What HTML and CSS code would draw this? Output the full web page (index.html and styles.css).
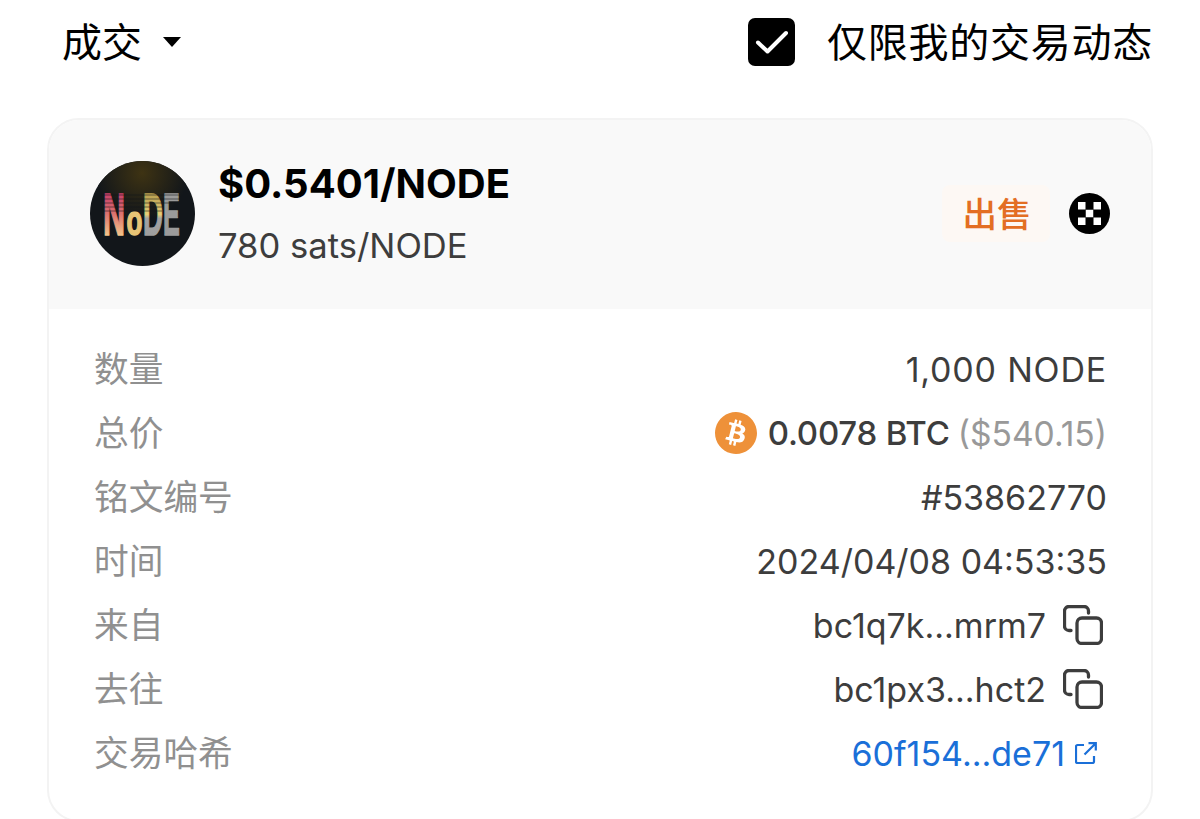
FILE: index.html
```html
<!DOCTYPE html>
<html lang="zh-CN">

<head>
  <meta charset="UTF-8">
  <meta name="viewport" content="width=device-width, initial-scale=1">
  <title>成交</title>
  <link rel="stylesheet" href="styles.css">
</head>

<body>
  <div class="topo">
    <div class="filtro">成交 <span class="seta"></span></div>
    <label class="so-meu">
      <span class="caixa">
        <svg width="47" height="48" viewBox="0 0 47 48"><path d="M10 24.500 L19.500 33.500 L38 15" fill="none" stroke="#fff" stroke-width="4" stroke-linecap="round" stroke-linejoin="round"/></svg>
      </span>
      <span class="so-meu-txt">仅限我的交易动态</span>
    </label>
  </div>

  <div class="card">
    <div class="card-topo">
      <svg class="avatar" width="105" height="105" viewBox="0 0 105 105">
        <defs>
          <clipPath id="redondo"><circle cx="52.500" cy="52.500" r="52.500"/></clipPath>
          <radialGradient id="brilho" cx="0.5" cy="0.5" r="0.5">
            <stop offset="0" stop-color="#3e3313"/>
            <stop offset="1" stop-color="#12161a"/>
          </radialGradient>
          <linearGradient id="cor-n" x1="0" y1="0" x2="0" y2="1">
            <stop offset="0.2" stop-color="#c9406a"/>
            <stop offset="0.5" stop-color="#dc7470"/>
            <stop offset="0.85" stop-color="#f5cd8c"/>
          </linearGradient>
          <linearGradient id="cor-d" x1="0" y1="0" x2="0" y2="1">
            <stop offset="0.2" stop-color="#b9a050"/>
            <stop offset="0.5" stop-color="#e8cf78"/>
            <stop offset="0.56" stop-color="#a3a3a3"/>
            <stop offset="1" stop-color="#9a9a9a"/>
          </linearGradient>
        </defs>
        <g clip-path="url(#redondo)">
          <rect width="105" height="105" fill="#12161a"/>
          <circle cx="52" cy="12" r="46" fill="url(#brilho)"/>
        </g>
        <g class="avatar-letras">
          <text transform="translate(13 74) scale(0.51 1)" fill="url(#cor-n)" stroke="url(#cor-n)">N</text>
          <text transform="translate(36.500 74) scale(0.62 1)" class="avatar-o" fill="#e7c476" stroke="#e7c476">o</text>
          <text transform="translate(53 74) scale(0.46 1)" fill="url(#cor-d)" stroke="url(#cor-d)">D</text>
          <text transform="translate(73 74) scale(0.42 1)" fill="#9b9b9b" stroke="#9b9b9b">E</text>
        </g>
        <path d="M13 34H90M13 38H90M13 42H90M13 46H72M13 50H72" stroke="#12161a" stroke-width="1" opacity="0.55"/>
      </svg>
      <div class="preco">
        <div class="preco-usd">$0.5401/NODE</div>
        <div class="preco-sats">780 sats/NODE</div>
      </div>
      <div class="venda">出售</div>
      <svg class="okx" width="41" height="41" viewBox="0 0 41 41">
        <circle cx="20.500" cy="20.500" r="20.500" fill="#000"/>
        <path d="M9 9h7.500v7.500H9zM24.500 9h7.500v7.500h-7.500zM16.750 16.750h7.500v7.500h-7.500zM9 24.500h7.500v7.500H9zM24.500 24.500h7.500v7.500h-7.500z" fill="#fff"/>
      </svg>
    </div>

    <div class="linhas">
      <div class="linha"><span class="rotulo">数量</span><span class="qtd">1,000 NODE</span></div>
      <div class="linha">
        <span class="rotulo">总价</span>
        <span class="total">
          <svg class="btc" width="42" height="42" viewBox="0 0 24 24">
            <circle cx="12" cy="12" r="10" fill="#fff"/>
            <path fill="#ee9139" d="M23.638 14.904c-1.602 6.43-8.113 10.34-14.542 8.736C2.67 22.05-1.244 15.525.362 9.105 1.962 2.67 8.475-1.243 14.9.358c6.43 1.605 10.342 8.115 8.738 14.548v-.002zm-6.35-4.613c.24-1.59-.974-2.45-2.64-3.03l.54-2.153-1.315-.33-.525 2.107c-.345-.087-.705-.167-1.064-.25l.526-2.127-1.32-.33-.54 2.165c-.285-.067-.565-.132-.84-.2l-1.815-.45-.35 1.407s.975.225.955.236c.535.136.63.486.615.766l-1.477 5.92c-.075.166-.24.406-.614.314.015.02-.96-.24-.96-.24l-.66 1.51 1.71.426.93.242-.54 2.19 1.32.327.54-2.17c.36.1.705.19 1.05.273l-.51 2.154 1.32.33.545-2.19c2.24.427 3.93.257 4.64-1.774.57-1.637-.03-2.58-1.217-3.196.854-.193 1.5-.76 1.68-1.93h.01zm-3.01 4.22c-.404 1.64-3.157.75-4.05.53l.72-2.9c.896.23 3.757.67 3.33 2.37zm.41-4.24c-.37 1.49-2.662.735-3.405.55l.654-2.64c.744.18 3.137.524 2.75 2.084v.006z"/>
          </svg>
          <b>0.0078 BTC</b> <span class="usd">($540.15)</span>
        </span>
      </div>
      <div class="linha"><span class="rotulo">铭文编号</span><span>#53862770</span></div>
      <div class="linha"><span class="rotulo">时间</span><span>2024/04/08 04:53:35</span></div>
      <div class="linha">
        <span class="rotulo">来自</span>
        <span class="endereco">bc1q7k...mrm7
          <svg class="copiar" width="40" height="40" viewBox="0 0 40 40"><path d="M8 25.500H6A4.500 4.500 0 0 1 1.500 21V6A4.500 4.500 0 0 1 6 1.500H21A4.500 4.500 0 0 1 25.500 6V8" fill="none" stroke="#3d3d3d" stroke-width="3.300" stroke-linecap="round"/><rect x="14" y="13" width="24.500" height="25.500" rx="5" fill="none" stroke="#3d3d3d" stroke-width="3.300"/></svg>
        </span>
      </div>
      <div class="linha">
        <span class="rotulo">去往</span>
        <span class="endereco">bc1px3...hct2
          <svg class="copiar" width="40" height="40" viewBox="0 0 40 40"><path d="M8 25.500H6A4.500 4.500 0 0 1 1.500 21V6A4.500 4.500 0 0 1 6 1.500H21A4.500 4.500 0 0 1 25.500 6V8" fill="none" stroke="#3d3d3d" stroke-width="3.300" stroke-linecap="round"/><rect x="14" y="13" width="24.500" height="25.500" rx="5" fill="none" stroke="#3d3d3d" stroke-width="3.300"/></svg>
        </span>
      </div>
      <div class="linha">
        <span class="rotulo">交易哈希</span>
        <a class="hash" href="#">60f154...de71
          <svg class="externo" width="22" height="22" viewBox="0 0 22 22"><path d="M9 3H2.500A1.500 1.500 0 0 0 1 4.500V19.500A1.500 1.500 0 0 0 2.500 21H17.500A1.500 1.500 0 0 0 19 19.500V14M9.500 12.500L20.500 1.500M13.500 1.200H20.800V8.500" fill="none" stroke="#1a6fd8" stroke-width="2.200"/></svg>
        </a>
      </div>
    </div>
  </div>
</body>

</html>
```

FILE: styles.css
```css
html,
body {
  margin: 0;
  height: 819px;
  overflow: hidden;
  background-color: #fff;
}

body {
  font-family: Inter, "Noto Sans CJK SC", sans-serif;
  color: #3d3d3d;
}

.topo {
  display: flex;
  justify-content: space-between;
  align-items: center;
  height: 84px;
  padding: 0 47px 34px 62px;
  color: #000;
  font-family: "Noto Sans CJK SC", sans-serif;
  font-size: 40px;
}

.filtro {
  display: flex;
  align-items: center;
  gap: 21px;
  margin-bottom: 5px;
}

.seta {
  width: 0;
  height: 0;
  margin-top: 5px;
  border-left: 9px solid transparent;
  border-right: 9px solid transparent;
  border-top: 10px solid #000;
}

.so-meu {
  display: flex;
  align-items: center;
  gap: 32px;
  letter-spacing: 0.75px;
  line-height: 48px;
}

.so-meu-txt {
  margin-bottom: 5px;
}

.caixa {
  display: flex;
  width: 47px;
  height: 48px;
  border-radius: 7px;
  background-color: #000;
}

.card {
  margin: 0 47px;
  height: 704px;
  box-sizing: border-box;
  border: 2px solid #f3f3f3;
  border-radius: 32px;
  overflow: hidden;
}

.card-topo {
  display: flex;
  align-items: center;
  height: 186px;
  padding: 0 41px 3px;
  background-color: #f9f9f9;
}

.avatar {
  flex-shrink: 0;
  margin-right: 23px;
}

.avatar-letras {
  font-family: "Liberation Sans", sans-serif;
  font-weight: 700;
  font-size: 60px;
  stroke-width: 1.5px;
}

.avatar-o {
  font-size: 42px;
}

.preco {
  flex: 1;
  margin-top: 3px;
}

.preco-usd {
  height: 60px;
  line-height: 60px;
  color: #000;
  font-size: 40px;
  font-weight: 700;
}

.preco-sats {
  height: 62px;
  line-height: 62px;
  font-size: 34.600px;
}

.venda {
  box-sizing: border-box;
  width: 108px;
  height: 57px;
  line-height: 55px;
  margin-right: 19px;
  padding-left: 2px;
  border-radius: 8px;
  background-color: #fdf8f4;
  color: #e36e23;
  font-family: "Noto Sans CJK SC", sans-serif;
  font-size: 34.500px;
  font-weight: 500;
  text-align: center;
}

.linhas {
  padding: 28px 44px 0 45px;
}

.linha {
  display: flex;
  justify-content: space-between;
  align-items: center;
  height: 64px;
  font-size: 34px;
}

.rotulo {
  margin-bottom: 4px;
  color: #909090;
  font-family: "Noto Sans CJK SC", sans-serif;
  font-size: 34.700px;
}

.qtd {
  letter-spacing: 0.8px;
}

.total {
  display: flex;
  align-items: center;
  gap: 8px;
}

.total b {
  font-weight: 500;
  font-size: 33px;
  letter-spacing: -0.2px;
}

.btc {
  margin-right: 3px;
}

.usd {
  color: #999;
  font-size: 33.600px;
}

.endereco {
  display: flex;
  align-items: center;
  gap: 17px;
  padding-right: 4px;
}

.hash {
  display: flex;
  align-items: center;
  gap: 10px;
  padding-right: 10px;
  color: #1a6fd8;
  text-decoration: none;
}
```
